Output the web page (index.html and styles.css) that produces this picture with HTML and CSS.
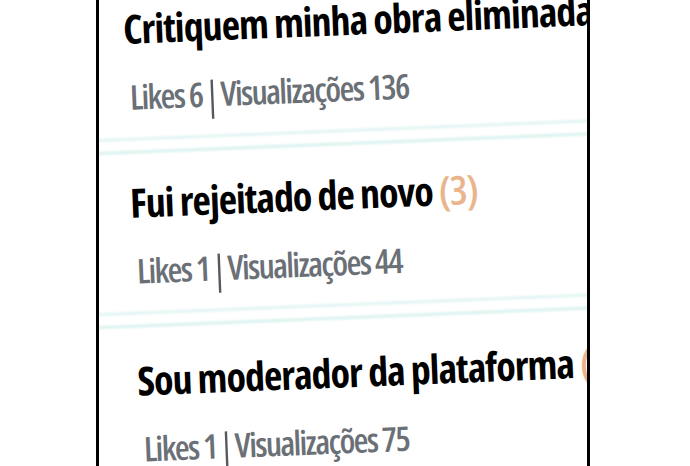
FILE: index.html
```html
<!DOCTYPE html>
<html lang="pt">
<head>
  <meta charset="UTF-8">
  <meta name="viewport" content="width=device-width, initial-scale=1.0">
  <title>Lista de obras</title>
  <link rel="stylesheet" href="styles.css">
</head>
<body>
  <div class="panel">
    <div class="post-list">
      <div class="post">
        <h2 class="post-title">Critiquem minha obra eliminada</h2>
        <p class="post-stats">Likes 6<span class="bar">|</span>Visualizações 136</p>
      </div>
      <div class="divider"></div>
      <div class="post">
        <h2 class="post-title">Fui rejeitado de novo <span class="count">(3)</span></h2>
        <p class="post-stats">Likes 1<span class="bar">|</span>Visualizações 44</p>
      </div>
      <div class="divider divider-low"></div>
      <div class="post">
        <h2 class="post-title">Sou moderador da plataforma <span class="count">(2)</span></h2>
        <p class="post-stats">Likes 1<span class="bar">|</span>Visualizações 75</p>
      </div>
    </div>
  </div>
</body>
</html>
```

FILE: styles.css
```css
body {
  margin: 0;
  background-color: #fff;
  font-family: "Open Sans", "DejaVu Sans", sans-serif;
}

.panel {
  margin-left: 96px;
  width: 488px;
  height: 466px;
  border-left: 3px solid #000;
  border-right: 3px solid #000;
  overflow: hidden;
  background-color: #fff;
}

.post-list {
  padding-top: 5px;
  padding-left: 23px;
  transform: rotate(-2.3deg);
  transform-origin: 23px 0;
}

.post-title {
  margin: 0;
  font-size: 40px;
  font-weight: 700;
  font-stretch: 75%;
  line-height: 48px;
  color: #000;
  white-space: nowrap;
  letter-spacing: -1px;
}

.count {
  color: #eab58c;
  font-weight: 600;
}

.post-stats {
  margin: 24px 0 0 4px;
  font-size: 34px;
  font-weight: 600;
  font-stretch: 75%;
  line-height: 40px;
  color: #6b7077;
  white-space: nowrap;
  letter-spacing: -1.6px;
}

.bar {
  display: inline-block;
  padding: 0 3px;
  font-weight: 400;
  color: #55595f;
  transform: scaleY(1.15);
  transform-origin: 50% 30%;
}

.divider {
  margin: 21px -60px 25px -60px;
  height: 10px;
  border-top: 3px solid #e0f5f2;
  border-bottom: 3px solid #d9f2ee;
  filter: blur(1.2px);
}

.divider-low {
  margin-bottom: 29px;
}
```
